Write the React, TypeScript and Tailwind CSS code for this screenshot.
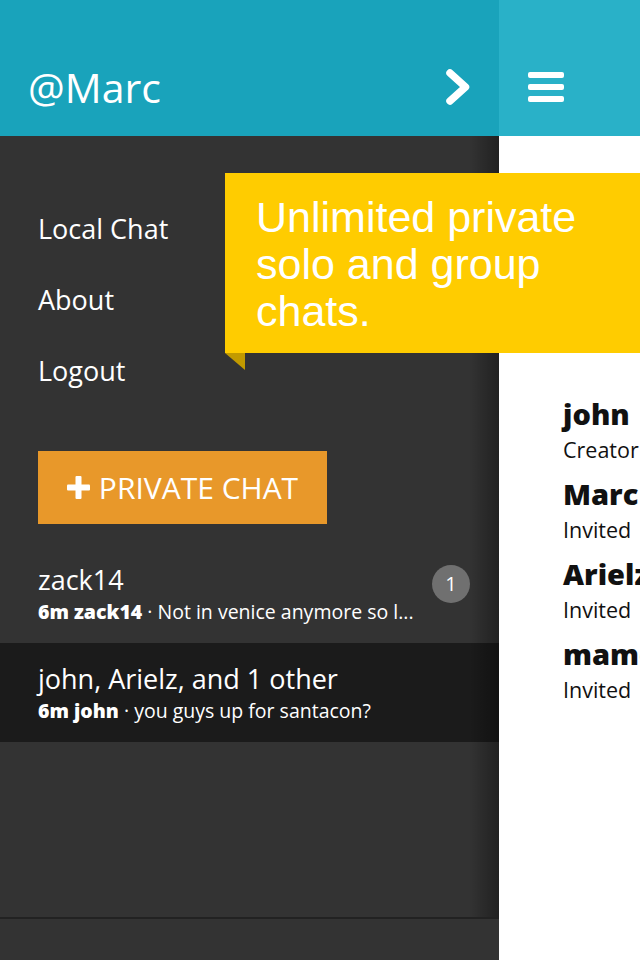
const chats = [
  {
    id: 'zack14',
    title: 'zack14',
    author: '6m zack14',
    preview: 'Not in venice anymore so l...',
    unread: 1,
    selected: false,
  },
  {
    id: 'group',
    title: 'john, Arielz, and 1 other',
    author: '6m john',
    preview: 'you guys up for santacon?',
    unread: 0,
    selected: true,
  },
];

const members = [
  { name: 'john', role: 'Creator' },
  { name: 'Marc', role: 'Invited' },
  { name: 'Arielz', role: 'Invited' },
  { name: 'mamecat', role: 'Invited' },
];

function ChevronRight() {
  return (
    <svg width="24" height="36" viewBox="0 0 24 36" fill="none">
      <polyline
        points="4,4 19.5,18 4,32"
        stroke="white"
        strokeWidth="7.5"
        strokeLinecap="round"
        strokeLinejoin="round"
      />
    </svg>
  );
}

function Hamburger() {
  return (
    <div className="flex flex-col gap-[6px]">
      <div className="w-[36px] h-[6px] rounded-[2px] bg-white" />
      <div className="w-[36px] h-[6px] rounded-[2px] bg-white" />
      <div className="w-[36px] h-[6px] rounded-[2px] bg-white" />
    </div>
  );
}

function PlusIcon() {
  return (
    <svg width="23" height="23" viewBox="0 0 23 23" fill="white">
      <rect x="8.5" y="0" width="6" height="23" rx="1" />
      <rect x="0" y="8.5" width="23" height="6" rx="1" />
    </svg>
  );
}

export default function App() {
  return (
    <div
      className="relative flex w-[640px] h-[960px] overflow-hidden bg-white"
      style={{ fontFamily: '"Open Sans", "DejaVu Sans", sans-serif' }}
    >
      {/* side menu */}
      <aside className="w-[499px] shrink-0 flex flex-col bg-[#333333] text-white">
        <header className="h-[136px] shrink-0 flex items-center pt-[38px] pl-[28px] pr-[29px] bg-[#19a3bb]">
          <span className="text-[41px] leading-none">@Marc</span>
          <span className="ml-auto flex">
            <ChevronRight />
          </span>
        </header>

        <div className="relative flex-1 flex flex-col">
          <nav className="flex flex-col pt-[57px] pl-[38px]">
            {['Local Chat', 'About', 'Logout'].map((item) => (
              <a key={item} className="text-[27px] leading-[71px] h-[71px]">
                {item}
              </a>
            ))}
          </nav>

          <button
            type="button"
            className="mt-[45px] ml-[38px] w-[289px] h-[73px] flex items-center justify-center gap-[9px] bg-[#e8982a] text-white"
          >
            <PlusIcon />
            <span className="text-[30px] leading-none">PRIVATE CHAT</span>
          </button>

          <ul className="mt-[20px] flex flex-col">
            {chats.map((chat) => (
              <li
                key={chat.id}
                className={`flex items-start h-[99px] pl-[38px] pr-[29px] ${
                  chat.selected ? 'bg-[#1b1b1b]' : ''
                }`}
              >
                <div className="flex flex-col pt-[20px] min-w-0">
                  <span className="text-[27px] leading-[32px] whitespace-nowrap">{chat.title}</span>
                  <span className="mt-[4px] text-[19.5px] leading-[24px] whitespace-nowrap">
                    <b className="font-extrabold">{chat.author}</b> · {chat.preview}
                  </span>
                </div>
                {chat.unread > 0 && (
                  <span className="ml-auto mt-[21px] w-[38px] h-[38px] shrink-0 rounded-full bg-[#707070] flex items-center justify-center text-[20px] leading-none">
                    {chat.unread}
                  </span>
                )}
              </li>
            ))}
          </ul>

          {/* inner shadow along the right edge */}
          <div className="pointer-events-none absolute top-0 bottom-0 right-0 w-[30px] bg-gradient-to-r from-transparent to-black/35" />
        </div>

        <footer className="h-[43px] shrink-0 border-t-2 border-[#222222] bg-[#333333]" />
      </aside>

      {/* chat details */}
      <main className="flex-1 min-w-0 flex flex-col">
        <header className="h-[136px] shrink-0 flex items-center pt-[38px] pl-[29px] bg-[#29b1c8]">
          <Hamburger />
        </header>
        <div className="flex flex-col pt-[261px] pl-[64px] text-[#111]">
          {members.map((m) => (
            <div key={m.name} className="flex flex-col h-[80px] whitespace-nowrap">
              <span className="text-[29px] leading-[34px] font-extrabold">{m.name}</span>
              <span className="mt-[5px] text-[21.5px] leading-[28px]">{m.role}</span>
            </div>
          ))}
        </div>
      </main>

      {/* tour callout */}
      <div className="absolute left-[225px] top-[173px] w-[415px] h-[180px] bg-[#ffcc00]">
        <p
          className="pt-[21px] pl-[31px] text-[43px] leading-[47px] text-white"
          style={{ fontFamily: '"Liberation Sans", Arial, sans-serif' }}
        >
          Unlimited private
          <br />
          solo and group
          <br />
          chats.
        </p>
        <svg className="absolute left-0 top-full" width="20" height="17" viewBox="0 0 20 17">
          <polygon points="0,0 20,0 20,17" fill="#c29a00" />
        </svg>
      </div>
    </div>
  );
}
